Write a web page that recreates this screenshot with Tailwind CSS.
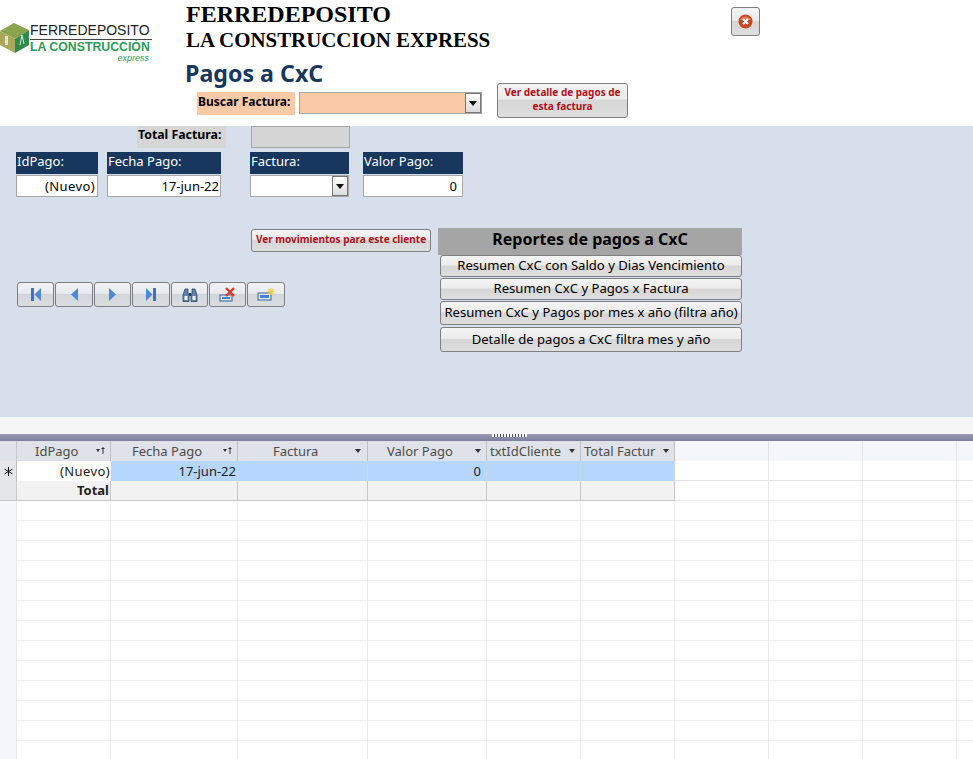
<!DOCTYPE html>
<html lang="es">
<head>
    <meta charset="UTF-8">
    <title>Pagos a CxC</title>
    <script src="https://cdn.jsdelivr.net/npm/@tailwindcss/browser@4"></script>
</head>
<body class="bg-white w-[973px] h-[759px] overflow-hidden font-['Noto_Sans',sans-serif] text-[13px] text-black">
    <!-- Header -->
    <header class="h-[126px] flex">
        <div class="w-[185px] pt-[21px] shrink-0 flex items-start">
            <svg width="30" height="32" viewBox="0 0 30 32" class="shrink-0 mt-[1px]">
                <polygon points="0,9 14,1 29,8 15,17" fill="#8aa34e"/>
                <polygon points="0,9 15,17 15,31 0,23" fill="#a9a75a"/>
                <polygon points="15,17 29,8 29,23 15,31" fill="#2f8a4c"/>
                <rect x="5" y="14" width="3" height="9" fill="#e8e4c8"/>
                <path d="M20 23 L22 13 L24 22" fill="none" stroke="#d8ecd8" stroke-width="1"/>
            </svg>
            <div class="w-[122px]">
                <div class="font-['Liberation_Sans',sans-serif] text-[14px] leading-[16px] text-[#222] mt-[1px] whitespace-nowrap">FERREDEPOSITO</div>
                <div class="border-t border-[#444] h-0 mt-[1px]"></div>
                <div class="font-['Liberation_Sans',sans-serif] font-bold text-[12.3px] leading-[15px] text-[#2b9a56] whitespace-nowrap">LA CONSTRUCCIÓN</div>
                <div class="font-['Liberation_Sans',sans-serif] italic text-[9px] leading-[9px] -mt-[1px] text-[#2b9a56] text-right pr-[3px]">express</div>
            </div>
        </div>
        <div class="w-[312px] shrink-0">
            <div class="pl-[1px] pt-[1px] font-['Liberation_Serif',serif] font-bold text-[24px] leading-[26px] whitespace-nowrap">FERREDEPOSITO</div>
            <div class="pl-[1px] pt-[1px] font-['Liberation_Serif',serif] font-bold text-[20.9px] leading-[24px] whitespace-nowrap">LA CONSTRUCCION EXPRESS</div>
            <div class="pt-[7px] font-bold text-[23.2px] leading-[28px] text-[#17375e] whitespace-nowrap">Pagos a CxC</div>
            <div class="flex ml-[12px] mt-[5px] items-start">
                <div class="w-[98px] h-[23px] bg-[#fac9a6] font-bold text-[12px] leading-[20px] pl-[1px] whitespace-nowrap">Buscar Factura:</div>
                <div class="ml-[4px] w-[183px] h-[22px] bg-[#fac9a6] border border-[#a6a6a6] flex justify-end shrink-0">
                    <span class="w-[16px] h-[20px] bg-gradient-to-b from-white to-[#dcdcdc] border border-[#777] flex items-center justify-center">
                        <svg width="8" height="5" viewBox="0 0 8 5"><polygon points="0,0 8,0 4,5" fill="#111"/></svg>
                    </span>
                </div>
            </div>
        </div>
        <div class="shrink-0 w-[234px] pt-[83px]">
            <button class="block w-[131px] h-[35px] pb-[4px] rounded-[3px] border border-[#7f7f7f] bg-[linear-gradient(#f4f4f4_0%,#ececec_45%,#d6d6d6_50%,#dedede_100%)] font-['Noto_Sans',sans-serif] font-bold text-[10px] leading-[14px] text-[#b01020]">Ver detalle de pagos de<br>esta factura</button>
        </div>
        <div class="pt-[7px]">
            <button class="w-[29px] h-[29px] rounded-[3px] border border-[#7f7f7f] bg-[linear-gradient(#f4f4f4_0%,#ececec_45%,#d6d6d6_50%,#dedede_100%)] flex items-center justify-center">
                <svg width="15" height="15" viewBox="0 0 15 15">
                    <circle cx="7.5" cy="7.5" r="7" fill="#cc4423"/>
                    <path d="M2 6 A6 6 0 0 1 13 6 Z" fill="#e07a58"/>
                    <path d="M5 5 L10 10 M10 5 L5 10" stroke="#fff" stroke-width="2.2"/>
                </svg>
            </button>
        </div>
    </header>

    <!-- Form panel -->
    <section class="h-[291px] bg-[#d6dfeb]">
        <div class="flex h-[22px]">
            <div class="ml-[137px] w-[89px] bg-[#d6d6d6] font-bold text-[12.3px] leading-[18px] pl-[1px] whitespace-nowrap">Total Factura:</div>
            <div class="ml-[25px] w-[99px] bg-[#d6d6d6] border border-[#a6a6a6]"></div>
        </div>
        <div class="flex mt-[4px] ml-[16px] text-white leading-[19px] text-[13px] h-[22px]">
            <div class="w-[82px] bg-[#17375e] pl-[1px]">IdPago:</div>
            <div class="w-[114px] ml-[9px] bg-[#17375e] pl-[1px]">Fecha Pago:</div>
            <div class="w-[99px] ml-[29px] bg-[#17375e] pl-[1px]">Factura:</div>
            <div class="w-[100px] ml-[14px] bg-[#17375e] pl-[1px]">Valor Pago:</div>
        </div>
        <div class="flex mt-[1px] ml-[16px] text-[13px] leading-[20px] h-[22px]">
            <div class="w-[82px] bg-white border border-[#a6a6a6] text-right pr-[2px] tracking-[0.4px]">(Nuevo)</div>
            <div class="w-[114px] ml-[9px] bg-white border border-[#a6a6a6] text-right pr-[1px]">17-jun-22</div>
            <div class="w-[99px] ml-[29px] bg-white border border-[#a6a6a6] flex justify-end">
                <span class="w-[16px] h-[20px] bg-gradient-to-b from-white to-[#dcdcdc] border border-[#777] flex items-center justify-center">
                    <svg width="8" height="5" viewBox="0 0 8 5"><polygon points="0,0 8,0 4,5" fill="#111"/></svg>
                </span>
            </div>
            <div class="w-[100px] ml-[14px] bg-white border border-[#a6a6a6] text-right pr-[5px]">0</div>
        </div>

        <div class="flex mt-[31px]">
            <div class="w-[438px] shrink-0">
                <button class="block ml-[251px] mt-[1px] w-[180px] h-[23px] pb-[2px] rounded-[3px] border border-[#7f7f7f] bg-[linear-gradient(#f4f4f4_0%,#ececec_45%,#d6d6d6_50%,#dedede_100%)] font-['Noto_Sans',sans-serif] font-bold text-[10px] text-[#b01020] whitespace-nowrap">Ver movimientos para este cliente</button>
                <div class="flex ml-[17px] mt-[30px] gap-[1px]">
                    <button class="w-[37px] h-[25px] rounded-[3px] border border-[#7f7f7f] bg-[linear-gradient(#f0f2f5_0%,#e8eaee_45%,#d2d5da_50%,#dadde2_100%)] flex items-center justify-center">
                        <svg width="10" height="13" viewBox="0 0 10 13"><rect x="0" y="0" width="3" height="13" fill="#3a72c4"/><polygon points="10,0 3.5,6.5 10,13" fill="#4a8ad8"/></svg>
                    </button>
                    <button class="w-[38px] h-[25px] rounded-[3px] border border-[#7f7f7f] bg-[linear-gradient(#f0f2f5_0%,#e8eaee_45%,#d2d5da_50%,#dadde2_100%)] flex items-center justify-center">
                        <svg width="7" height="13" viewBox="0 0 7 13"><polygon points="7,0 0,6.5 7,13" fill="#4a8ad8"/></svg>
                    </button>
                    <button class="w-[37px] h-[25px] rounded-[3px] border border-[#7f7f7f] bg-[linear-gradient(#f0f2f5_0%,#e8eaee_45%,#d2d5da_50%,#dadde2_100%)] flex items-center justify-center">
                        <svg width="7" height="13" viewBox="0 0 7 13"><polygon points="0,0 7,6.5 0,13" fill="#4a8ad8"/></svg>
                    </button>
                    <button class="w-[38px] h-[25px] rounded-[3px] border border-[#7f7f7f] bg-[linear-gradient(#f0f2f5_0%,#e8eaee_45%,#d2d5da_50%,#dadde2_100%)] flex items-center justify-center">
                        <svg width="10" height="13" viewBox="0 0 10 13"><polygon points="0,0 6.5,6.5 0,13" fill="#4a8ad8"/><rect x="7" y="0" width="3" height="13" fill="#3a72c4"/></svg>
                    </button>
                    <button class="w-[37px] h-[25px] rounded-[3px] border border-[#7f7f7f] bg-[linear-gradient(#f0f2f5_0%,#e8eaee_45%,#d2d5da_50%,#dadde2_100%)] flex items-center justify-center">
                        <svg width="16" height="14" viewBox="0 0 16 14"><path d="M3 1 H6 V6 H7 V13.5 H1 V7 Z" fill="#5f83ad" stroke="#2c4464" stroke-width="0.8"/><path d="M10 1 H13 L15 7 V13.5 H9 V6 H10 Z" fill="#5f83ad" stroke="#2c4464" stroke-width="0.8"/><rect x="7" y="5" width="2" height="3" fill="#2c4464"/><rect x="2.5" y="8" width="3" height="4" fill="#eef3f9"/><rect x="10.5" y="8" width="3" height="4" fill="#eef3f9"/></svg>
                    </button>
                    <button class="w-[37px] h-[25px] rounded-[3px] border border-[#7f7f7f] bg-[linear-gradient(#f0f2f5_0%,#e8eaee_45%,#d2d5da_50%,#dadde2_100%)] flex items-center justify-center">
                        <svg width="18" height="16" viewBox="0 0 18 16"><rect x="1" y="8" width="12" height="6" fill="#dfe9f5" stroke="#3a5f94"/><rect x="3" y="10" width="8" height="2" fill="#3d83d8"/><path d="M7 1 L15 9 M15 1 L7 9" stroke="#d83a26" stroke-width="2.4"/></svg>
                    </button>
                    <button class="w-[38px] h-[25px] rounded-[3px] border border-[#7f7f7f] bg-[linear-gradient(#f0f2f5_0%,#e8eaee_45%,#d2d5da_50%,#dadde2_100%)] flex items-center justify-center">
                        <svg width="18" height="14" viewBox="0 0 18 14"><rect x="1" y="5" width="13" height="7" fill="#dfe9f5" stroke="#3a5f94"/><rect x="3" y="7" width="9" height="3" fill="#3d83d8"/><path d="M14 0 V7 M10.5 3.5 H17.5 M11.5 1 L16.5 6 M16.5 1 L11.5 6" stroke="#f0d040" stroke-width="1.2"/></svg>
                    </button>
                </div>
            </div>
            <div class="w-[304px] shrink-0">
                <div class="h-[27px] bg-[#a5a5a5] text-center font-bold text-[16px] leading-[23px] whitespace-nowrap">Reportes de pagos a CxC</div>
                <div class="ml-[2px] flex flex-col text-[13.1px]">
                    <button class="h-[22px] mb-[1px] rounded-[3px] border border-[#7f7f7f] bg-[linear-gradient(#f4f4f4_0%,#ececec_45%,#d6d6d6_50%,#dedede_100%)] whitespace-nowrap">Resumen CxC con Saldo y Dias Vencimiento</button>
                    <button class="h-[22px] mb-[1px] rounded-[3px] border border-[#7f7f7f] bg-[linear-gradient(#f4f4f4_0%,#ececec_45%,#d6d6d6_50%,#dedede_100%)] whitespace-nowrap">Resumen CxC y Pagos x Factura</button>
                    <button class="h-[24px] mb-[2px] rounded-[3px] border border-[#7f7f7f] bg-[linear-gradient(#f4f4f4_0%,#ececec_45%,#d6d6d6_50%,#dedede_100%)] whitespace-nowrap">Resumen CxC y Pagos por mes x año (filtra año)</button>
                    <button class="h-[25px] rounded-[3px] border border-[#7f7f7f] bg-[linear-gradient(#f4f4f4_0%,#ececec_45%,#d6d6d6_50%,#dedede_100%)] whitespace-nowrap">Detalle de pagos a CxC filtra mes y año</button>
                </div>
            </div>
        </div>
    </section>

    <div class="h-[17px] bg-[#f6f6f6]"></div>

    <!-- Splitter -->
    <div class="h-[7px] bg-gradient-to-b from-[#9a9ab4] to-[#7e7e9e]">
        <div class="ml-[492px] w-[35px] h-[3px] pt-[1px] bg-[repeating-linear-gradient(90deg,#fff_0,#fff_2px,#4a4a5a_2px,#4a4a5a_3px)]"></div>
    </div>

    <!-- Datasheet -->
    <div class="text-[13px] text-[#222]">
        <div class="grid grid-cols-[17px_94px_127px_130px_119px_94px_94px_94px_94px_94px_17px] h-[20px] leading-[18px] text-[#4c4c4c]">
            <div class="bg-[#dfe2e8] border-r border-[#c8c8c8]"></div>
            <div class="bg-[#dfe2e8] border-r border-[#c0c0c0] flex items-center justify-between pl-[18px] pr-[5px] pb-[1px]">IdPago<svg width="9" height="7" viewBox="0 0 9 7"><polygon points="0,2 4,2 2,5" fill="#333"/><path d="M7 0 V7 M5.5 1.5 H8.5" stroke="#333"/></svg></div>
            <div class="bg-[#dfe2e8] border-r border-[#c0c0c0] flex items-center justify-between pl-[21px] pr-[5px] pb-[1px]">Fecha Pago<svg width="9" height="7" viewBox="0 0 9 7"><polygon points="0,2 4,2 2,5" fill="#333"/><path d="M7 0 V7 M5.5 1.5 H8.5" stroke="#333"/></svg></div>
            <div class="bg-[#dfe2e8] border-r border-[#c0c0c0] flex items-center justify-between pl-[35px] pr-[6px] pb-[1px]">Factura<svg width="6" height="4" viewBox="0 0 6 4"><polygon points="0,0 6,0 3,4" fill="#333"/></svg></div>
            <div class="bg-[#dfe2e8] border-r border-[#c0c0c0] flex items-center justify-between pl-[19px] pr-[5px] pb-[1px]">Valor Pago<svg width="6" height="4" viewBox="0 0 6 4"><polygon points="0,0 6,0 3,4" fill="#333"/></svg></div>
            <div class="bg-[#dfe2e8] border-r border-[#c0c0c0] flex items-center justify-between pl-[3px] pr-[5px] pb-[1px] whitespace-nowrap">txtIdCliente<svg width="6" height="4" viewBox="0 0 6 4"><polygon points="0,0 6,0 3,4" fill="#333"/></svg></div>
            <div class="bg-[#dfe2e8] border-r border-[#c0c0c0] flex items-center justify-between pl-[3px] pr-[5px] pb-[1px] whitespace-nowrap overflow-hidden">Total Factur<svg width="6" height="4" viewBox="0 0 6 4" class="shrink-0"><polygon points="0,0 6,0 3,4" fill="#333"/></svg></div>
            <div class="bg-[#f5f6fc] border-r border-[#e4e4ea]"></div>
            <div class="bg-[#f5f6fc] border-r border-[#e4e4ea]"></div>
            <div class="bg-[#f5f6fc] border-r border-[#e4e4ea]"></div>
            <div class="bg-[#f5f6fc]"></div>
        </div>
        <div class="grid grid-cols-[17px_94px_127px_130px_119px_94px_94px_94px_94px_94px_17px] h-[20px] leading-[20px] border-b border-[#e4e4e4]">
            <div class="bg-[#e4e6ea] border-r border-[#c0c0c0] flex items-center justify-center">
                <svg width="9" height="9" viewBox="0 0 9 9"><path d="M4.5 0 V9 M0.6 2.2 L8.4 6.8 M8.4 2.2 L0.6 6.8" stroke="#111" stroke-width="1"/></svg>
            </div>
            <div class="bg-white text-right pr-[1px] tracking-[0.4px]">(Nuevo)</div>
            <div class="bg-[#b5d7fd] border-r border-[#c8d8e8] text-right pr-[1px]">17-jun-22</div>
            <div class="bg-[#b5d7fd] border-r border-[#c8d8e8]"></div>
            <div class="bg-[#b5d7fd] border-r border-[#c8d8e8] text-right pr-[5px]">0</div>
            <div class="bg-[#b5d7fd] border-r border-[#c8d8e8]"></div>
            <div class="bg-[#b5d7fd] border-r border-[#c8d8e8]"></div>
            <div class="border-r border-[#ececf0]"></div>
            <div class="border-r border-[#ececf0]"></div>
            <div class="border-r border-[#ececf0]"></div>
            <div></div>
        </div>
        <div class="grid grid-cols-[17px_94px_127px_130px_119px_94px_94px_94px_94px_94px_17px] h-[20px] leading-[19px]">
            <div class="bg-[#e4e6ea] border-r border-b border-[#c8c8c8]"></div>
            <div class="bg-[#f2f2f2] border-r border-b border-[#c8c8c8] text-right pr-[1px] font-bold">Total</div>
            <div class="bg-[#f2f2f2] border-r border-b border-[#c8c8c8]"></div>
            <div class="bg-[#f2f2f2] border-r border-b border-[#c8c8c8]"></div>
            <div class="bg-[#f2f2f2] border-r border-b border-[#c8c8c8]"></div>
            <div class="bg-[#f2f2f2] border-r border-b border-[#c8c8c8]"></div>
            <div class="bg-[#f2f2f2] border-r border-b border-[#c8c8c8]"></div>
            <div class="border-r border-b border-[#ececf0]"></div>
            <div class="border-r border-b border-[#ececf0]"></div>
            <div class="border-r border-b border-[#ececf0]"></div>
            <div class="border-b border-[#ececf0]"></div>
        </div>
        <!-- empty rows drawn as a repeating grid background -->
        <div class="h-[258px] bg-[linear-gradient(90deg,#f5f7fc_0,#f5f7fc_16px,transparent_16px),repeating-linear-gradient(180deg,transparent_0,transparent_19px,#efeff2_19px,#efeff2_20px)] grid grid-cols-[17px_94px_127px_130px_119px_94px_94px_94px_94px_94px_17px]">
            <div class="border-r border-[#ececf0]"></div>
            <div class="border-r border-[#ececf0]"></div>
            <div class="border-r border-[#ececf0]"></div>
            <div class="border-r border-[#ececf0]"></div>
            <div class="border-r border-[#ececf0]"></div>
            <div class="border-r border-[#ececf0]"></div>
            <div class="border-r border-[#ececf0]"></div>
            <div class="border-r border-[#ececf0]"></div>
            <div class="border-r border-[#ececf0]"></div>
            <div class="border-r border-[#ececf0]"></div>
        </div>
    </div>
</body>
</html>
